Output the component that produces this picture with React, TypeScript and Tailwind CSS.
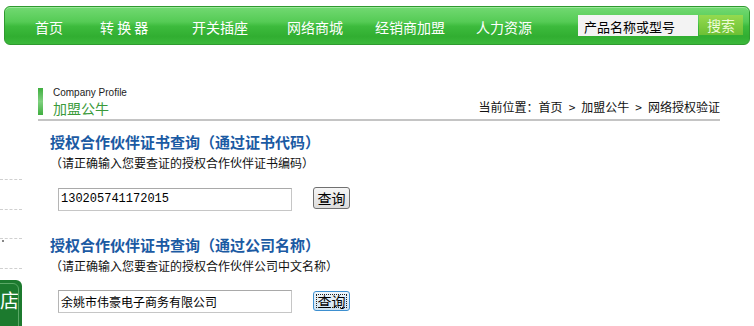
import React from "react";

const cjk = '"Noto Sans CJK SC", "Liberation Sans", sans-serif';

export default function App() {
  const navItems = [
    { t: "首页", w: "w-[65px]" },
    { t: "转 换 器", w: "w-[92px]" },
    { t: "开关插座", w: "w-[95px]" },
    { t: "网络商城", w: "w-[88px]" },
    { t: "经销商加盟", w: "w-[101px]" },
    { t: "人力资源", w: "w-[80px]" },
  ];
  return (
    <div className="w-[754px] h-[326px] overflow-hidden bg-white" style={{ fontFamily: cjk }}>
      {/* nav */}
      <div className="ml-[4px] mt-[6px] w-[746px] h-[39px] rounded-[6px] border border-[#2f9a2f] flex items-center bg-[linear-gradient(to_bottom,#72d972_0%,#55cb55_40%,#3dbb3d_52%,#31ae31_80%,#3cb93c_100%)] shadow-[inset_0_1px_0_#9be89b]">
        <div className="ml-[30px] flex items-center pt-[3px]">
          {navItems.map((n) => (
            <div key={n.t} className={`${n.w} text-[14px] leading-[16px] text-white whitespace-nowrap`}>
              {n.t}
            </div>
          ))}
        </div>
        <div className="ml-auto mr-[6px] flex items-start">
          <div className="w-[120px] h-[21px] bg-[#f3f3f3] text-[13px] leading-[21px] text-black pl-[6px] pt-[1px]">
            产品名称或型号
          </div>
          <div className="w-[44px] h-[20px] ml-[1px] bg-[linear-gradient(to_bottom,#95da4f,#6cc034)] text-[14px] leading-[20px] text-[#eefcd8] text-center">
            搜索
          </div>
        </div>
      </div>

      <div className="flex">
        {/* left sidebar */}
        <div className="w-[22px] flex flex-col">
          <div className="mt-[134px] border-t border-dashed border-[#d0d0d0]" />
          <div className="mt-[29px] border-t border-dashed border-[#d0d0d0]" />
          <div className="mt-[28px] border-t border-dashed border-[#d0d0d0]" />
          <div className="mt-[1px] ml-[2px] w-[2px] h-[2px] bg-[#888]" />
          <div className="mt-[26px] border-t border-dashed border-[#d0d0d0]" />
          <div className="mt-[11px] w-[22px] h-[46px] bg-[#1c7a2e] rounded-tr-[6px] overflow-hidden relative">
            <div className="absolute left-[-6px] top-[3px] w-[25px] h-[60px] border border-[#5aa866] rounded-[6px]" />
            <div className="ml-[0px] mt-[9px] text-[19px] leading-[22px] text-white">店</div>
          </div>
        </div>

        {/* main */}
        <div className="ml-[16px] w-[682px]">
          <div className="mt-[45px] h-[31px] flex items-end justify-between border-b-2 border-[#c4c4c4]">
            <div className="flex items-end mb-[4px]">
              <div className="w-[5px] h-[27px] bg-[linear-gradient(to_bottom,#3fae3f,#7fd07f,#3fae3f)]" />
              <div className="ml-[10px] flex flex-col">
                <div className="text-[10px] leading-[12px] text-[#222]" style={{ fontFamily: '"Liberation Sans", Arial, sans-serif' }}>
                  Company Profile
                </div>
                <div className="mt-[2px] text-[14px] leading-[14px] text-[#3a9a3a]">加盟公牛</div>
              </div>
            </div>
            <div className="flex text-[12px] leading-[14px] text-[#111] mb-[5px] whitespace-nowrap">
              <span>当前位置：首页</span>
              <span className="mx-[6px]">&gt;</span>
              <span>加盟公牛</span>
              <span className="mx-[6px]">&gt;</span>
              <span>网络授权验证</span>
            </div>
          </div>

          <div className="pl-[12px]">
            <div className="mt-[12px] text-[15px] leading-[18px] font-bold text-[#1b5aa3] whitespace-nowrap">
              授权合作伙伴证书查询（通过证书代码）
            </div>
            <div className="mt-[5px] text-[12px] leading-[14px] text-[#111] whitespace-nowrap">
              （请正确输入您要查证的授权合作伙伴证书编码）
            </div>
          </div>
          <div className="mt-[18px] pl-[20px] flex items-start">
            <div
              className="w-[234px] h-[23px] border border-[#c6c6c6] border-t-[#a9a9a9] border-l-[#b5b5b5] text-[12px] leading-[21px] pl-[2px] text-black"
              style={{ fontFamily: '"Liberation Mono", monospace' }}
            >
              130205741172015
            </div>
            <div className="ml-[21px] -mt-[1px] w-[37px] h-[22px] rounded-[3px] border border-[#707070] bg-[linear-gradient(to_bottom,#f6f6f6,#dcdcdc)] text-[14px] leading-[20px] text-center text-black">
              查询
            </div>
          </div>

          <div className="pl-[12px]">
            <div className="mt-[25px] text-[15px] leading-[18px] font-bold text-[#1b5aa3] whitespace-nowrap">
              授权合作伙伴证书查询（通过公司名称）
            </div>
            <div className="mt-[5px] text-[12px] leading-[14px] text-[#111] whitespace-nowrap">
              （请正确输入您要查证的授权合作伙伴公司中文名称）
            </div>
          </div>
          <div className="mt-[17px] pl-[20px] flex items-start">
            <div className="w-[234px] h-[23px] border border-[#c6c6c6] border-t-[#a9a9a9] border-l-[#b5b5b5] text-[12px] leading-[21px] pl-[2px] text-black whitespace-nowrap">
              余姚市伟豪电子商务有限公司
            </div>
            <div className="ml-[21px] mt-[1px] w-[37px] h-[20px] rounded-[3px] border border-[#3d8fd0] bg-[linear-gradient(to_bottom,#eef6fc,#cfe3f3)] p-[2px]">
              <div className="w-full h-full border border-dotted border-[#222] text-[14px] leading-[12px] text-center text-black">
                查询
              </div>
            </div>
          </div>
        </div>
      </div>
    </div>
  );
}
